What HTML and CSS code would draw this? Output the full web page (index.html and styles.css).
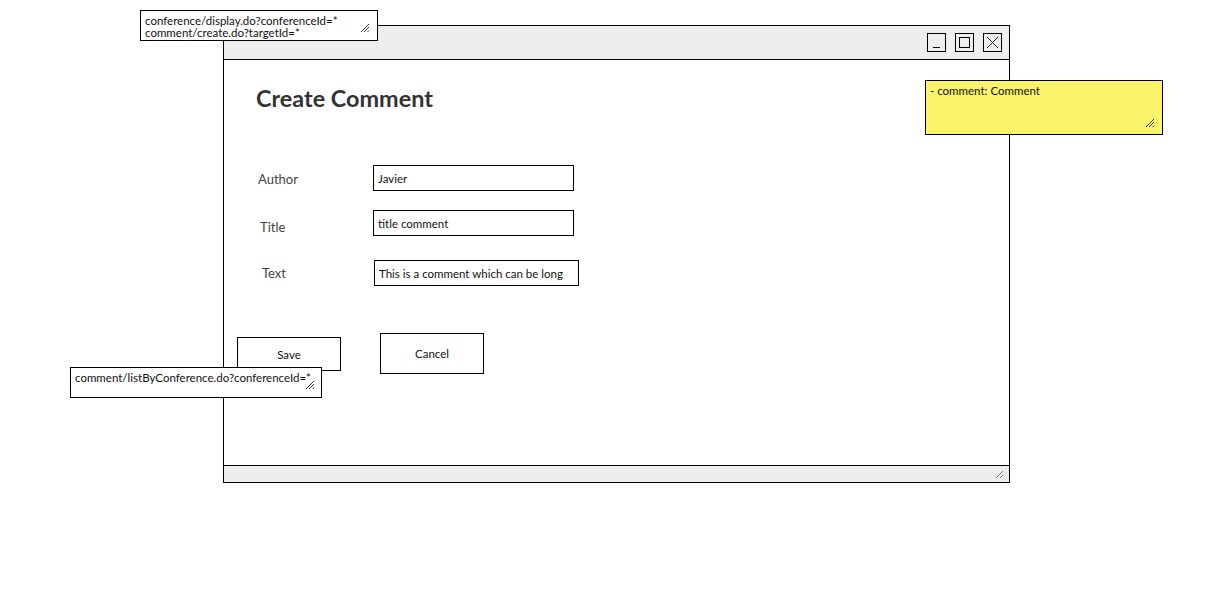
FILE: index.html
```html
<!DOCTYPE html>
<html>
<head>
<meta charset="utf-8">
<link rel="stylesheet" href="styles.css">
</head>
<body>
<div class="window">
  <div class="titlebar">
    <div class="ctrl">
      <svg width="17" height="17" viewBox="0 0 17 17"><line x1="5" y1="13.5" x2="12" y2="13.5" stroke="#000" stroke-width="1"/></svg>
    </div>
    <div class="ctrl">
      <svg width="17" height="17" viewBox="0 0 17 17"><rect x="3.5" y="3.5" width="10" height="10" fill="none" stroke="#000" stroke-width="1"/></svg>
    </div>
    <div class="ctrl">
      <svg width="17" height="17" viewBox="0 0 17 17"><path d="M3 3 L14 14 M14 3 L3 14" stroke="#000" stroke-width="0.8" fill="none"/></svg>
    </div>
  </div>
  <div class="body">
    <h1 class="heading">Create Comment</h1>
    <div class="row row-author">
      <span class="label">Author</span>
      <div class="field">Javier</div>
    </div>
    <div class="row row-title">
      <span class="label">Title</span>
      <div class="field">title comment</div>
    </div>
    <div class="row row-text">
      <span class="label">Text</span>
      <div class="field field-wide">This is a comment which can be long</div>
    </div>
    <div class="buttons">
      <div class="btn btn-save">Save</div>
      <div class="btn btn-cancel">Cancel</div>
    </div>
  </div>
  <div class="statusbar">
    <svg class="grip" width="9" height="9" viewBox="0 0 9 9"><path d="M1 8 L8 1 M5 8 L8 5" stroke="#555" stroke-width="0.8" fill="none"/></svg>
  </div>
</div>

<div class="note note-top">
  <div>conference/display.do?conferenceId=*</div>
  <div>comment/create.do?targetId=*</div>
  <svg class="grip" width="10" height="10" viewBox="0 0 10 10"><path d="M1 9 L9 1 M4 9 L9 4 M7.5 9 L9 7.5" stroke="#000" stroke-width="0.8" fill="none"/></svg>
</div>

<div class="note note-yellow">
  <div>- comment: Comment</div>
  <svg class="grip" width="10" height="10" viewBox="0 0 10 10"><path d="M1 9 L9 1 M4 9 L9 4 M7.5 9 L9 7.5" stroke="#000" stroke-width="0.8" fill="none"/></svg>
</div>

<div class="note note-bottom">
  <div>comment/listByConference.do?conferenceId=*</div>
  <svg class="grip" width="10" height="10" viewBox="0 0 10 10"><path d="M1 9 L9 1 M4 9 L9 4 M7.5 9 L9 7.5" stroke="#000" stroke-width="0.8" fill="none"/></svg>
</div>
</body>
</html>
```
FILE: styles.css
```css
html, body {
  margin: 0;
  padding: 0;
  background: #fff;
}
body {
  width: 1212px;
  height: 592px;
  position: relative;
  overflow: hidden;
  font-family: "Lato", "Open Sans", sans-serif;
  color: #222;
}

.window {
  position: absolute;
  left: 223px;
  top: 25px;
  width: 785px;
  height: 456px;
  border: 1px solid #000;
  display: flex;
  flex-direction: column;
  background: #fff;
}

.titlebar {
  height: 34px;
  flex: none;
  box-sizing: border-box;
  background: #eeeeee;
  border-bottom: 1px solid #000;
  display: flex;
  justify-content: flex-end;
  align-items: flex-start;
  gap: 9px;
  padding: 7px 7px 0 0;
}
.ctrl {
  width: 17px;
  height: 17px;
  border: 1px solid #000;
}
.ctrl svg { display: block; }

.body {
  flex: 1;
  padding: 0 0 0 32px;
}

.heading {
  margin: 24px 0 0 0;
  font-size: 23.4px;
  font-weight: 700;
  color: #333;
  line-height: 28px;
}

.row {
  display: flex;
  align-items: flex-start;
}
.label {
  font-size: 13px;
  line-height: 16px;
  color: #444;
  flex: none;
}
.field {
  box-sizing: border-box;
  width: 201px;
  height: 26px;
  border: 1px solid #000;
  font-size: 11.5px;
  color: #111;
  padding: 0 4px;
  display: flex;
  align-items: center;
}
.row-author { margin-top: 53px; }
.row-author .label { padding-left: 2px; width: 115px; margin-top: 6px; }
.row-title { margin-top: 19px; }
.row-title .label { padding-left: 4px; width: 113px; margin-top: 9px; }
.row-text { margin-top: 24px; }
.row-text .label { padding-left: 6px; width: 112px; margin-top: 5px; }
.field-wide { width: 205px; }

.buttons {
  display: flex;
  align-items: flex-start;
  margin-top: 47px;
  margin-left: -19px;
}
.btn {
  box-sizing: border-box;
  width: 104px;
  border: 1px solid #000;
  font-size: 11.5px;
  color: #111;
  display: flex;
  align-items: center;
  justify-content: center;
  background: #fff;
}
.btn-save {
  height: 34px;
  margin-top: 4px;
}
.btn-cancel {
  height: 41px;
  margin-left: 39px;
}

.statusbar {
  height: 17px;
  flex: none;
  background: #eeeeee;
  border-top: 1px solid #000;
  box-sizing: border-box;
  position: relative;
}
.statusbar .grip {
  position: absolute;
  right: 5px;
  bottom: 3px;
}

.note {
  position: absolute;
  box-sizing: border-box;
  border: 1px solid #000;
  background: #fff;
  font-size: 11.5px;
  line-height: 12px;
  color: #111;
  padding: 4px 4px;
}
.note .grip {
  position: absolute;
  right: 7px;
  bottom: 6px;
}
.note-top {
  left: 140px;
  top: 10px;
  width: 238px;
  height: 31px;
}
.note-top .grip { bottom: 7px; right: 7px; }
.note-yellow {
  left: 925px;
  top: 80px;
  width: 238px;
  height: 55px;
  background: #faf46a;
}
.note-bottom {
  left: 70px;
  top: 367px;
  width: 252px;
  height: 31px;
}
.note-bottom .grip { right: 6px; bottom: 7px; }
```
